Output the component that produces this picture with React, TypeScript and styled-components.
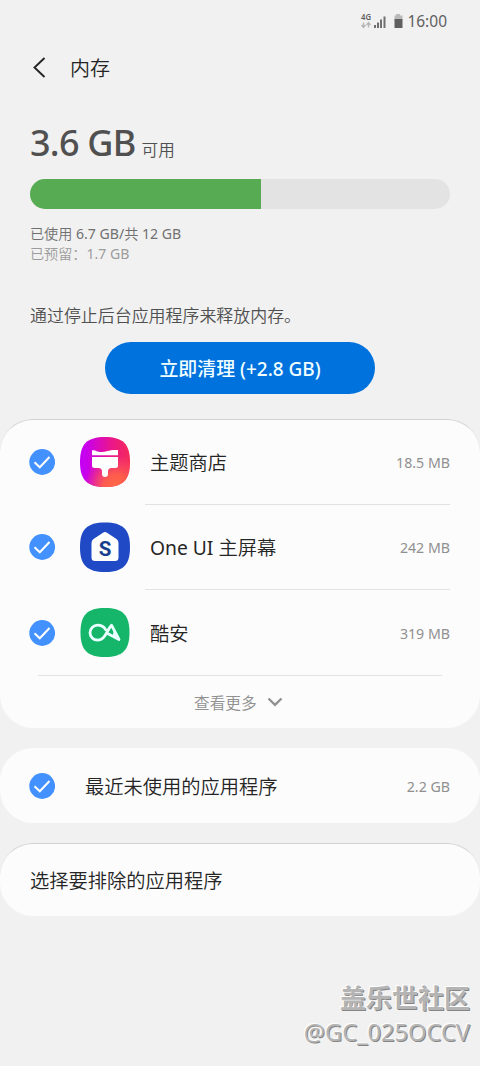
import React from "react";
import styled, { createGlobalStyle } from "styled-components";

const Global = createGlobalStyle`
  * { box-sizing: border-box; }
  html, body { margin: 0; background: #f1f1f1; }
  body { font-family: "Noto Sans", "Noto Sans CJK SC", sans-serif; font-weight: 350; color: #252525; }
`;

const Screen = styled.main`
  width: 480px;
  height: 1066px;
  display: flex;
  flex-direction: column;
  background: #f1f1f1;
  overflow: hidden;
  white-space: nowrap;
`;

const Latin = styled.span`
  font-weight: 400;
`;

const StatusBar = styled.header`
  height: 40px;
  padding: 2px 33px 0 0;
  display: flex;
  justify-content: flex-end;
  align-items: center;
  font-size: 15.5px;
  font-weight: 400;
  line-height: 20px;
  color: #606060;
`;

const StatusIcons = styled.svg`
  width: 46px;
  height: 20px;
  margin-right: 1px;
`;

const TitleBar = styled.div`
  height: 56px;
  padding-left: 30px;
  display: flex;
  align-items: center;
  font-size: 20px;
  line-height: 28px;
`;

const Title = styled.span`
  padding-top: 2px;
`;

const BackIcon = styled.svg`
  width: 20px;
  height: 24px;
  margin-right: 20px;
`;

const Summary = styled.section`
  height: 203px;
  padding: 22px 30px 0;
`;

const Available = styled.div`
  height: 50px;
  display: flex;
  align-items: baseline;
  gap: 6px;
  line-height: 50px;
  color: #505050;
`;

const Amount = styled.strong`
  font-size: 36px;
  font-weight: 500;
  letter-spacing: -0.75px;
`;

const Unit = styled.span`
  font-size: 16.6px;
`;

const Meter = styled.div`
  height: 30px;
  margin: 11px 0 15px;
  border-radius: 15px;
  background: #e3e3e3;
  overflow: hidden;
`;

const MeterFill = styled.div`
  width: 55%;
  height: 100%;
  background: #57ab52;
`;

const Usage = styled.div<{ $tone: string }>`
  height: 20px;
  line-height: 19px;
  font-size: 14.1px;
  color: ${(p) => p.$tone};
`;

const Clean = styled.section`
  height: 120px;
  padding-top: 4px;
  display: flex;
  flex-direction: column;
  align-items: center;
`;

const Hint = styled.p`
  align-self: stretch;
  margin: 0 0 14px;
  padding-left: 30px;
  font-size: 16.95px;
  line-height: 25px;
  color: #505050;
`;

const CleanButton = styled.button`
  width: 270px;
  height: 52px;
  padding: 0;
  border: 0;
  border-radius: 26px;
  background: #0072de;
  color: #f2ffff;
  font: 500 18.95px "Noto Sans", "Noto Sans CJK SC", sans-serif;
`;

const Card = styled.section<{ $height: number; $gap?: number; $edge?: boolean }>`
  flex: none;
  height: ${(p) => p.$height}px;
  margin-bottom: ${(p) => p.$gap ?? 0}px;
  border-radius: 33px;
  border-top: 1px solid ${(p) => (p.$edge ? "#d2d2d2" : "#fcfcfc")};
  background: #fcfcfc;
`;

const Row = styled.div<{ $height: number }>`
  height: ${(p) => p.$height}px;
  padding: 0 30px 0 29px;
  display: flex;
  align-items: center;
`;

const Check = styled.svg`
  width: 26px;
  height: 26px;
  flex: none;
`;

const AppIcon = styled.svg`
  width: 50px;
  height: 50px;
  margin-left: 25px;
  flex: none;
`;

const Name = styled.span<{ $indent: number; $drop?: number }>`
  flex: 1;
  margin-left: ${(p) => p.$indent}px;
  padding-top: ${(p) => p.$drop ?? 0}px;
  font-size: 19.25px;
  line-height: 28px;
`;

const Size = styled.span<{ $drop?: number }>`
  padding-top: ${(p) => p.$drop ?? 0}px;
  font-size: 14.2px;
  font-weight: 400;
  line-height: 20px;
  color: #909090;
`;

const Divider = styled.div<{ $left: number; $right: number }>`
  height: 1px;
  margin: 0 ${(p) => p.$right}px 0 ${(p) => p.$left}px;
  background: #e2e2e2;
`;

const More = styled.div`
  height: 52px;
  padding-left: 194px;
  display: flex;
  align-items: center;
  gap: 10px;
  font-size: 15.7px;
  color: #909090;
`;

const Chevron = styled.svg`
  width: 16px;
  height: 12px;
`;

const Watermark = styled.footer`
  margin-top: 64px;
  padding-right: 10px;
  text-align: right;
  color: #b4b4b4;
  text-shadow: -1px -1px 1px #ffffff, 1px 1px 0 #858585;
`;

const Community = styled.div`
  font-size: 26px;
  font-weight: 600;
  line-height: 36px;
`;

const Author = styled.div`
  font-size: 23.6px;
  font-weight: 400;
  line-height: 33px;
`;

const squircle = "M25 0C43 0 50 7 50 25S43 50 25 50 0 43 0 25 7 0 25 0Z";

const CheckMark = () => (
  <Check viewBox="0 0 26 26">
    <circle cx="13.2" cy="13" r="12.9" fill="#4291ff" />
    <path d="M5.500 13.200 10.800 18.300 20.500 8" fill="none" stroke="#fff" strokeWidth="2" />
  </Check>
);

const ThemeIcon = () => (
  <AppIcon viewBox="0 0 50 50">
    <defs>
      <linearGradient id="theme-base" x1="0" y1=".4" x2="1" y2=".4">
        <stop offset="0" stopColor="#c400f5" />
        <stop offset=".15" stopColor="#c900ea" />
        <stop offset=".6" stopColor="#e9158f" />
        <stop offset="1" stopColor="#f52a58" />
      </linearGradient>
      <radialGradient id="theme-glow" cx=".72" cy="1" r=".65">
        <stop offset="0" stopColor="#ff6a45" />
        <stop offset=".4" stopColor="#ff6248" stopOpacity=".9" />
        <stop offset="1" stopColor="#ff5060" stopOpacity="0" />
      </radialGradient>
    </defs>
    <path d={squircle} fill="url(#theme-base)" />
    <path d={squircle} fill="url(#theme-glow)" />
    <path fill="#fff" d="M12 13.200C16 13 17 15 21 15c5 0 8-2.400 17-2v5.200H12ZM12 20h26v8.500q0 2.500-2.500 2.500h-4q-3.500 0-3.500 3.500V37q0 3-3 3t-3-3v-2.500q0-3.500-3.500-3.500h-4Q12 31 12 28.500Z" />
  </AppIcon>
);

const HomeIcon = () => (
  <AppIcon viewBox="0 0 50 50">
    <path d={squircle} fill="#2049c5" transform="translate(0 .5) scale(1 .99)" />
    <path fill="#fff" d="M23 10.700Q25 9.300 27 10.700L36.500 17Q38.500 18.400 38.500 21V35.500Q38.500 39 35 39H15Q11.500 39 11.500 35.500V21Q11.500 18.400 13.500 17Z" />
    <text x="25" y="34" textAnchor="middle" fontFamily="Roboto" fontWeight="700" fontSize="20.500" fill="#183f8e">S</text>
  </AppIcon>
);

const CoolapkIcon = () => (
  <AppIcon viewBox="0 0 50 50">
    <path d={squircle} fill="#15b66a" transform="translate(.5 0) scale(.98)" />
    <path d="M25.500 21.500C23.500 18 21 17.200 17.500 17.200A7.500 7.500 0 0 0 17.500 32.200C25.500 32.200 27 21.500 31.500 17.200L39 31.500 27.500 25.500" fill="none" stroke="#eaffff" strokeWidth="2.800" strokeLinejoin="round" strokeLinecap="round" />
    <path d="M34 22 39.500 32.500 32.500 28.500Z" fill="#eaffff" />
  </AppIcon>
);

const apps = [
  { name: <>主题商店</>, size: "18.5 MB", Icon: ThemeIcon, height: 84 },
  { name: <><Latin>One UI </Latin>主屏幕</>, size: "242 MB", Icon: HomeIcon, height: 84 },
  { name: <>酷安</>, size: "319 MB", Icon: CoolapkIcon, height: 85 },
];

export default function App() {
  return (
    <Screen>
      <Global />
      <StatusBar>
        <StatusIcons viewBox="0 0 46 20">
          <text x="1" y="9" fontSize="8" fontWeight="600" textLength="10" lengthAdjust="spacingAndGlyphs" fill="#606060">4G</text>
          <path d="M3.500 16.500V11.500M1.500 14l2 2.500 2-2.500M8.500 11.500V16.500M6.500 14l2-2.500 2 2.500" fill="none" stroke="#b5b5b5" strokeWidth="1.300" />
          <path d="M14 14h2v3h-2zM17 11.500h2V17h-2zM20 8.500h2V17h-2zM23.500 5.500h2V17h-2z" fill="#707070" />
          <path d="M36 3h4v1.500h2.500V9h-8V4.500H36z" fill="#bababa" />
          <path d="M34.500 8h8v9h-8z" fill="#606060" />
        </StatusIcons>
        16:00
      </StatusBar>
      <TitleBar>
        <BackIcon viewBox="0 0 20 24">
          <path d="M14.500 2 4.500 11.500l10 9.500" fill="none" stroke="#252525" strokeWidth="1.900" />
        </BackIcon>
        <Title>内存</Title>
      </TitleBar>
      <Summary>
        <Available>
          <Amount>3.6 GB</Amount>
          <Unit>可用</Unit>
        </Available>
        <Meter>
          <MeterFill />
        </Meter>
        <Usage $tone="#707070">已使用<Latin> 6.7 GB/</Latin>共<Latin> 12 GB</Latin></Usage>
        <Usage $tone="#9c9c9c">已预留：<Latin>1.7 GB</Latin></Usage>
      </Summary>
      <Clean>
        <Hint>通过停止后台应用程序来释放内存。</Hint>
        <CleanButton>立即清理 (+2.8 GB)</CleanButton>
      </Clean>
      <Card $height={309} $gap={20} $edge>
        {apps.map(({ name, size, Icon, height }, i) => (
          <React.Fragment key={size}>
            <Row $height={height}>
              <CheckMark />
              <Icon />
              <Name $indent={20} $drop={2}>{name}</Name>
              <Size $drop={2}>{size}</Size>
            </Row>
            <Divider $left={i < 2 ? 145 : 38} $right={i < 2 ? 30 : 38} />
          </React.Fragment>
        ))}
        <More>
          查看更多
          <Chevron viewBox="0 0 16 12">
            <path d="M1.500 2.500 8 8.800l6.500-6.300" fill="none" stroke="#909090" strokeWidth="2.300" />
          </Chevron>
        </More>
      </Card>
      <Card $height={75} $gap={20}>
        <Row $height={73}>
          <CheckMark />
          <Name $indent={30} $drop={3}>最近未使用的应用程序</Name>
          <Size $drop={2}>2.2 GB</Size>
        </Row>
      </Card>
      <Card $height={73} $edge>
        <Row $height={73}>
          <Name $indent={1}>选择要排除的应用程序</Name>
        </Row>
      </Card>
      <Watermark>
        <Community>盖乐世社区</Community>
        <Author>@GC_025OCCV</Author>
      </Watermark>
    </Screen>
  );
}
